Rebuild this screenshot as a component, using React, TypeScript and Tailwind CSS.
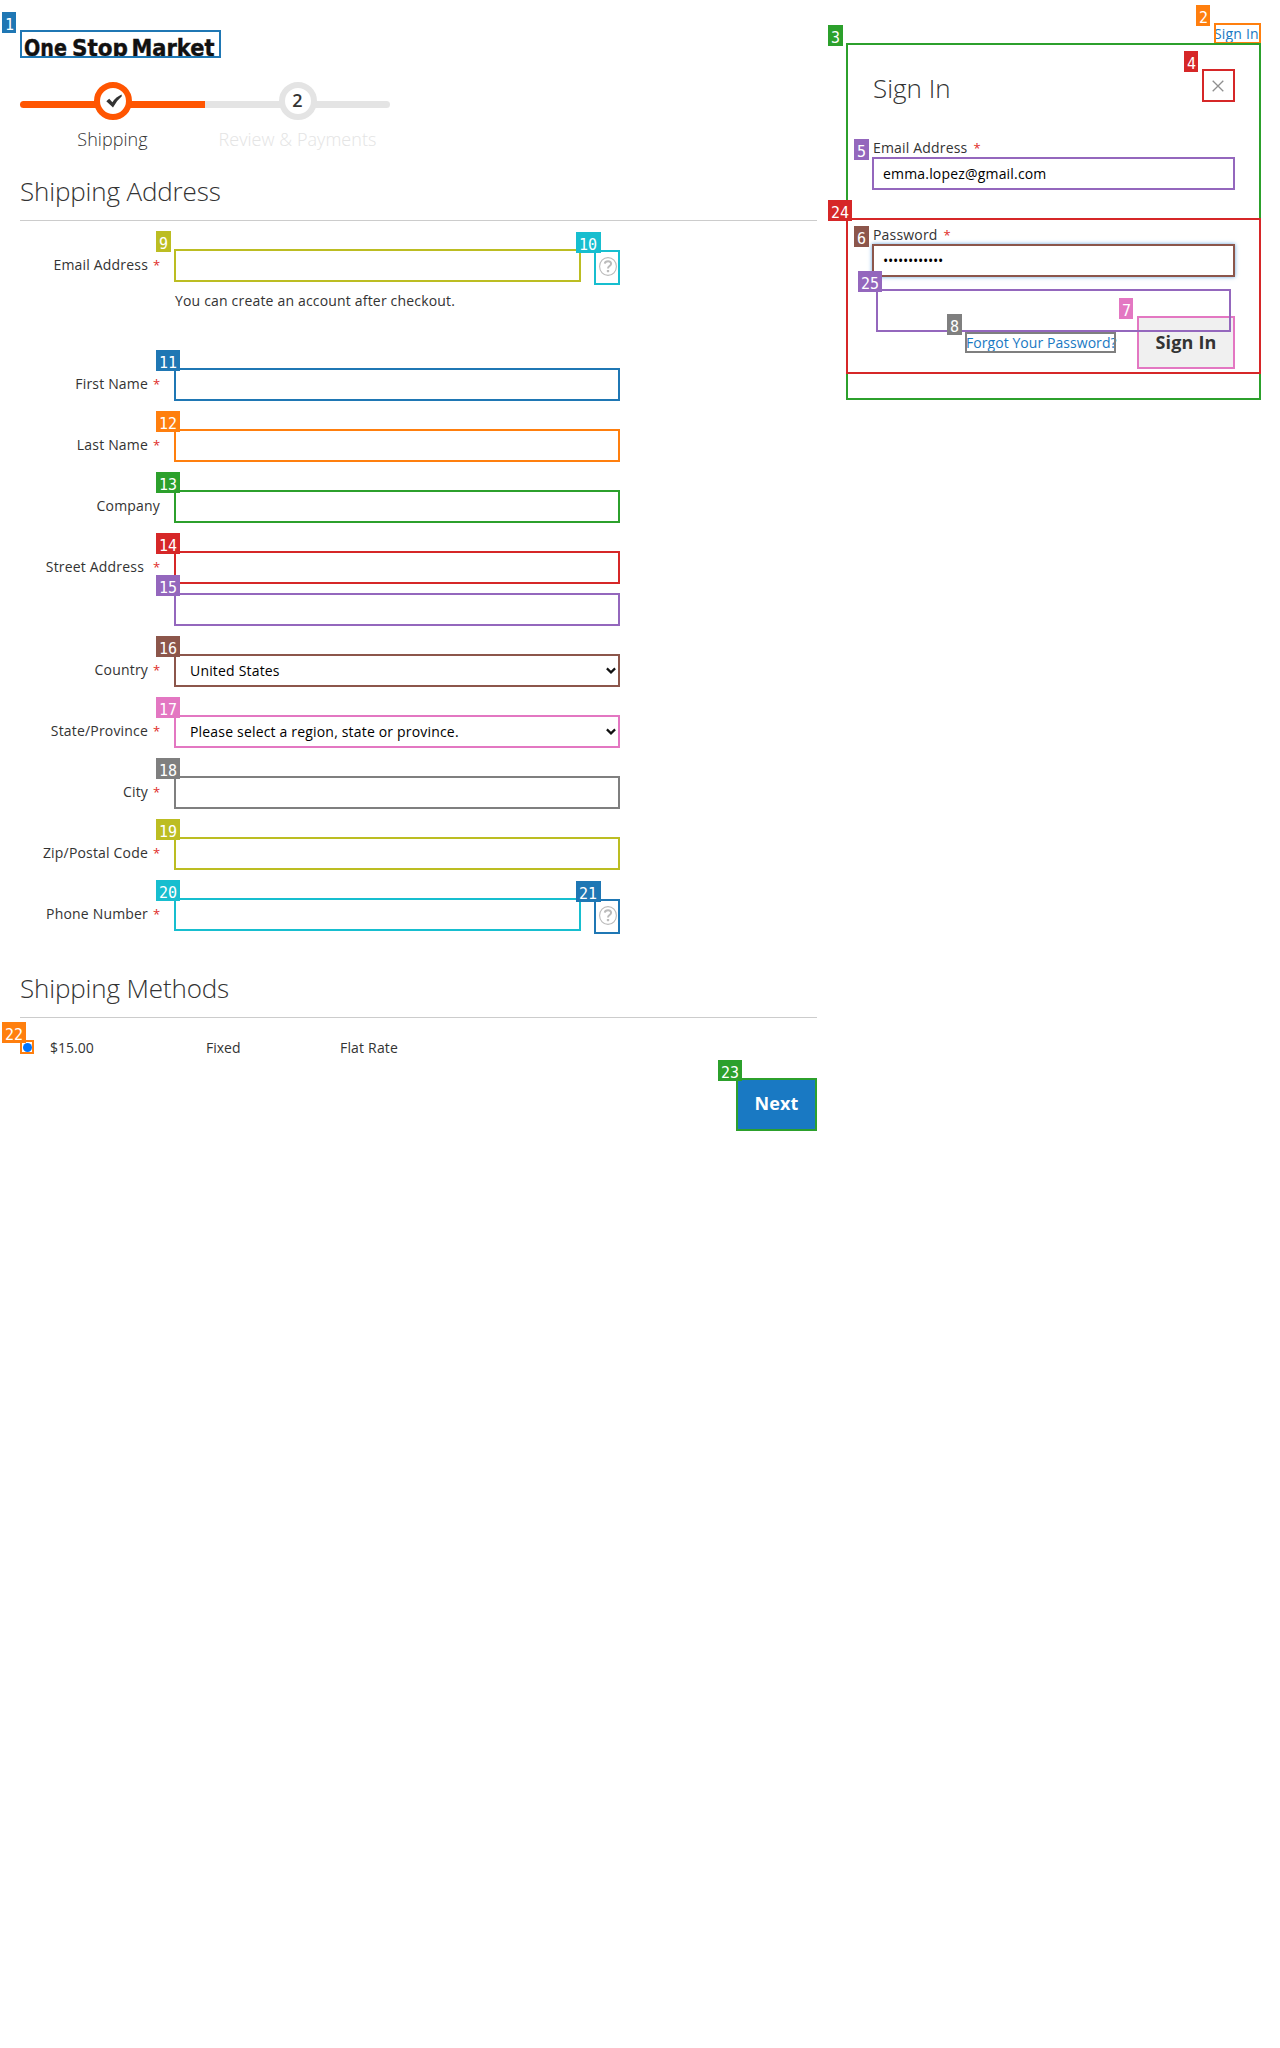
import React from 'react';

type Mark = { n: number; border: string; bg: string };

const BLUE = { border: 'border-[#1f77b4]', bg: 'bg-[#1f77b4]' };
const ORANGE = { border: 'border-[#ff7f0e]', bg: 'bg-[#ff7f0e]' };
const GREEN = { border: 'border-[#2ca02c]', bg: 'bg-[#2ca02c]' };
const RED = { border: 'border-[#d62728]', bg: 'bg-[#d62728]' };
const PURPLE = { border: 'border-[#9467bd]', bg: 'bg-[#9467bd]' };
const BROWN = { border: 'border-[#8c564b]', bg: 'bg-[#8c564b]' };
const PINK = { border: 'border-[#e377c2]', bg: 'bg-[#e377c2]' };
const GRAY = { border: 'border-[#7f7f7f]', bg: 'bg-[#7f7f7f]' };
const OLIVE = { border: 'border-[#bcbd22]', bg: 'bg-[#bcbd22]' };
const CYAN = { border: 'border-[#17becf]', bg: 'bg-[#17becf]' };

/* A two-pixel frame with its numbered tag above the top left corner. */
function Box({ mark, className = '', children, wide = '' }: { mark: Mark; className?: string; children?: React.ReactNode; wide?: string }) {
  const width = wide || (mark.n > 9 ? 'w-[24px]' : 'w-[15px]');
  return (
    <div className={`relative shrink-0 border-2 ${mark.border} ${className}`}>
      <span
        className={`absolute -left-[20px] -top-[20px] z-10 h-[21px] ${width} ${mark.bg} pl-[3px] pt-[4px] text-left font-['DejaVu_Sans_Mono','Liberation_Mono',monospace] text-[15px] leading-[19px] font-normal tracking-normal text-white`}
      >
        {mark.n}
      </span>
      {children}
    </div>
  );
}

/* A link whose frame lies over its text. */
function FramedLink({ mark, className, frame, wide, children }: { mark: Mark; className: string; frame: string; wide?: string; children: React.ReactNode }) {
  return (
    <a className={`relative block h-[21px] whitespace-nowrap leading-[22px] text-[#1979c3] ${className}`}>
      {children}
      <div className="absolute left-0 top-0">
        <Box mark={mark} wide={wide} className={`h-[21px] ${frame}`} />
      </div>
    </a>
  );
}

function Help({ mark }: { mark: Mark }) {
  return (
    <Box mark={mark} wide="w-[25px]" className="ml-[13px] mt-px h-[35px] w-[26px]">
      <svg className="ml-[3px] mt-[5px]" width="18" height="19" viewBox="0 0 18 19" fill="none" stroke="#bbb">
        <ellipse cx="9" cy="9.5" rx="8.4" ry="8.9" strokeWidth="1.1" />
        <path d="M5.8 6.6C6.2 3.4 12.2 3.4 12.1 6.8C12 9 9 9 9 11.4" strokeWidth="2" />
        <path d="M9 13v2.2" strokeWidth="2.3" />
      </svg>
    </Box>
  );
}

function Row({ label, required = true, gap = 'gap-[5px]', children }: { label: string; required?: boolean; gap?: string; children: React.ReactNode }) {
  return (
    <div className="flex">
      <div className={`mr-[14px] mt-[6px] flex h-5 w-[140px] justify-end leading-5 ${gap}`}>
        <span>{label}</span>
        {required && <Star />}
      </div>
      {children}
    </div>
  );
}

function Star() {
  return <span className="w-[7px] text-[13px] tracking-normal text-[#e02b27]">*</span>;
}

function Field({ mark, value }: { mark: Mark; value?: string }) {
  return (
    <Box mark={mark} className="flex h-[33px] w-[446px] items-center justify-between pl-[14px] pr-[2px] text-black">
      {value && (
        <>
          <span className="leading-5">{value}</span>
          <svg width="10" height="8" viewBox="0 0 10 8" fill="none" stroke="#111" strokeWidth="2.2">
            <path d="M0.9 1.4L5 5.4L9.1 1.4" />
          </svg>
        </>
      )}
    </Box>
  );
}

function Progress() {
  return (
    <ol className="mt-6 flex w-[370px] text-center text-[18px] font-light leading-[25px] tracking-[0.05px]">
      <li className="w-[185px]">
        <div className="relative flex h-[38px] items-center justify-center">
          <div className="absolute inset-x-0 top-[19px] h-[7px] rounded-l-[4px] bg-[#ff5501]" />
          <div className="relative flex size-[38px] items-center justify-center rounded-full border-[6px] border-[#ff5501] bg-white">
            <svg className="ml-[3px]" width="16" height="14" viewBox="0 0 16 14" fill="#333">
              <path d="M0.3 7.2L3.2 4.8L6.4 8.2Q10 3 15.6 0.6L15.8 2.2Q10.5 6.5 7 13.6Z" />
            </svg>
          </div>
        </div>
        <div className="mt-[7px]">Shipping</div>
      </li>
      <li className="w-[185px] text-[#e4e4e4]">
        <div className="relative flex h-[38px] items-center justify-center">
          <div className="absolute inset-x-0 top-[19px] h-[7px] rounded-r-[4px] bg-[#e4e4e4]" />
          <div className="relative flex size-[38px] items-center justify-center rounded-full border-[6px] border-[#e4e4e4] bg-white pb-px font-semibold text-[#333]">2</div>
        </div>
        <div className="mt-[7px] whitespace-nowrap">Review &amp; Payments</div>
      </li>
    </ol>
  );
}

function SignInPanel() {
  return (
    <Box mark={{ n: 3, ...GREEN }} className="h-[357px] w-[415px] px-6">
      <div className="flex h-[112px] justify-between pt-6">
        <h2 className="ml-px mt-px text-[26px] font-light leading-[36px] tracking-normal">Sign In</h2>
        <Box mark={{ n: 4, ...RED }} wide="w-[14px]" className="flex size-[33px] items-center justify-center">
          <svg className="mr-px mt-px" width="12" height="12" viewBox="0 0 12 12" stroke="#8f8f8f" strokeWidth="1.3">
            <path d="M0.7 0.7L11.3 11.3M11.3 0.7L0.7 11.3" />
          </svg>
        </Box>
      </div>
      <div className="-mt-[19px] ml-px flex h-5 gap-[6px] leading-5">Email Address <Star /></div>
      <Box mark={{ n: 5, ...PURPLE }} className="-mt-[1px] flex h-[33px] w-[363px] items-center pl-[9px] text-black">emma.lopez@gmail.com</Box>
      <div className="ml-px mt-[35px] flex h-5 gap-[6px] leading-5">Password <Star /></div>
      <Box mark={{ n: 6, ...BROWN }} className="-mt-px flex h-[33px] w-[363px] items-center pl-[9px] text-black shadow-[0_0_4px_0px_#68a8e0]">
        <span className="leading-5 tracking-[-0.27px]">••••••••••••</span>
      </Box>
      <div className="mt-[39px] flex justify-end gap-[21px]">
        <FramedLink mark={{ n: 8, ...GRAY }} className="mt-4 w-[151px] pl-px tracking-[0.06px]" frame="w-[151px]">Forgot Your Password?</FramedLink>
        <Box mark={{ n: 7, ...PINK }} wide="w-[14px]" className="flex h-[53px] w-[98px] items-center justify-center bg-[#f0f0f0] text-[18px] font-bold">Sign In</Box>
      </div>
      <div className="pointer-events-none absolute -left-[2px] top-[173px]">
        <Box mark={{ n: 24, ...RED }} className="h-[156px] w-[415px]" />
      </div>
      <div className="pointer-events-none absolute left-[28px] top-[244px]">
        <Box mark={{ n: 25, ...PURPLE }} className="h-[43px] w-[355px]" />
      </div>
    </Box>
  );
}

export default function App() {
  return (
    <div className="flex h-[2048px] w-[1280px] items-start bg-white pl-5 font-['Open_Sans','Noto_Sans',sans-serif] text-[14px] tracking-[0.18px] text-[#333]">
      <main className="w-[797px] pt-[30px]">
        <Box mark={{ n: 1, ...BLUE }} wide="w-[14px]" className="h-[28px] w-[201px]">
          <svg className="block" width="197" height="24" viewBox="0 0 197 24" fill="#111" stroke="#111" strokeWidth="0.4" fontFamily="DejaVu Sans, sans-serif" fontWeight="700" fontSize="23" letterSpacing="0">
            <text x="2" y="23.5" textLength="43" lengthAdjust="spacingAndGlyphs">One</text>
            <text x="50" y="23.5" textLength="56" lengthAdjust="spacingAndGlyphs">Stop</text>
            <text x="109.5" y="23.5" textLength="83" lengthAdjust="spacingAndGlyphs">Market</text>
          </svg>
        </Box>
        <Progress />
        <h2 className="mt-[21px] h-[48px] border-b border-[#ccc] text-[26px] font-light leading-[36px] tracking-[-0.15px]">Shipping Address</h2>
        <section className="pt-7">
          <Row label="Email Address">
            <Box mark={{ n: 9, ...OLIVE }} className="h-[33px] w-[407px]" />
            <Help mark={{ n: 10, ...CYAN }} />
          </Row>
          <p className="ml-[155px] mt-[6px] h-5 leading-5">You can create an account after checkout.</p>
          <div className="mt-[57px] flex flex-col gap-7">
            <Row label="First Name"><Field mark={{ n: 11, ...BLUE }} /></Row>
            <Row label="Last Name"><Field mark={{ n: 12, ...ORANGE }} /></Row>
            <Row label="Company" required={false}><Field mark={{ n: 13, ...GREEN }} /></Row>
            <Row label="Street Address" gap="gap-[9px]">
              <div className="flex flex-col gap-[9px]">
                <Field mark={{ n: 14, ...RED }} />
                <Field mark={{ n: 15, ...PURPLE }} />
              </div>
            </Row>
            <Row label="Country"><Field mark={{ n: 16, ...BROWN }} value="United States" /></Row>
            <Row label="State/Province"><Field mark={{ n: 17, ...PINK }} value="Please select a region, state or province." /></Row>
            <Row label="City"><Field mark={{ n: 18, ...GRAY }} /></Row>
            <Row label="Zip/Postal Code"><Field mark={{ n: 19, ...OLIVE }} /></Row>
            <Row label="Phone Number">
              <Box mark={{ n: 20, ...CYAN }} className="h-[33px] w-[407px]" />
              <Help mark={{ n: 21, ...BLUE }} />
            </Row>
          </div>
        </section>
        <h2 className="mt-9 h-[48px] border-b border-[#ccc] text-[26px] font-light leading-[36px] tracking-[-0.15px]">Shipping Methods</h2>
        <div className="flex h-[60px] pt-[19px] leading-5">
          <Box mark={{ n: 22, ...ORANGE }} className="mt-[3px] flex size-[14px] items-center justify-center">
            <span className="size-[9px] rounded-full bg-[#0075ff]" />
          </Box>
          <span className="ml-4 mt-px w-[156px] tracking-normal">$15.00</span>
          <span className="mt-px w-[134px] tracking-normal">Fixed</span>
          <span className="mt-px">Flat Rate</span>
        </div>
        <div className="flex justify-end">
          <Box mark={{ n: 23, ...GREEN }} className="flex h-[53px] w-[81px] items-center justify-center bg-[#1979c3] pb-[2px] text-[18px] font-bold text-white">Next</Box>
        </div>
      </main>
      <aside className="ml-[29px] flex w-[415px] flex-col items-end pt-[23px]">
        <FramedLink mark={{ n: 2, ...ORANGE }} wide="w-[14px]" className="-mb-px w-[47px]" frame="w-[47px]">Sign In</FramedLink>
        <SignInPanel />
      </aside>
    </div>
  );
}
